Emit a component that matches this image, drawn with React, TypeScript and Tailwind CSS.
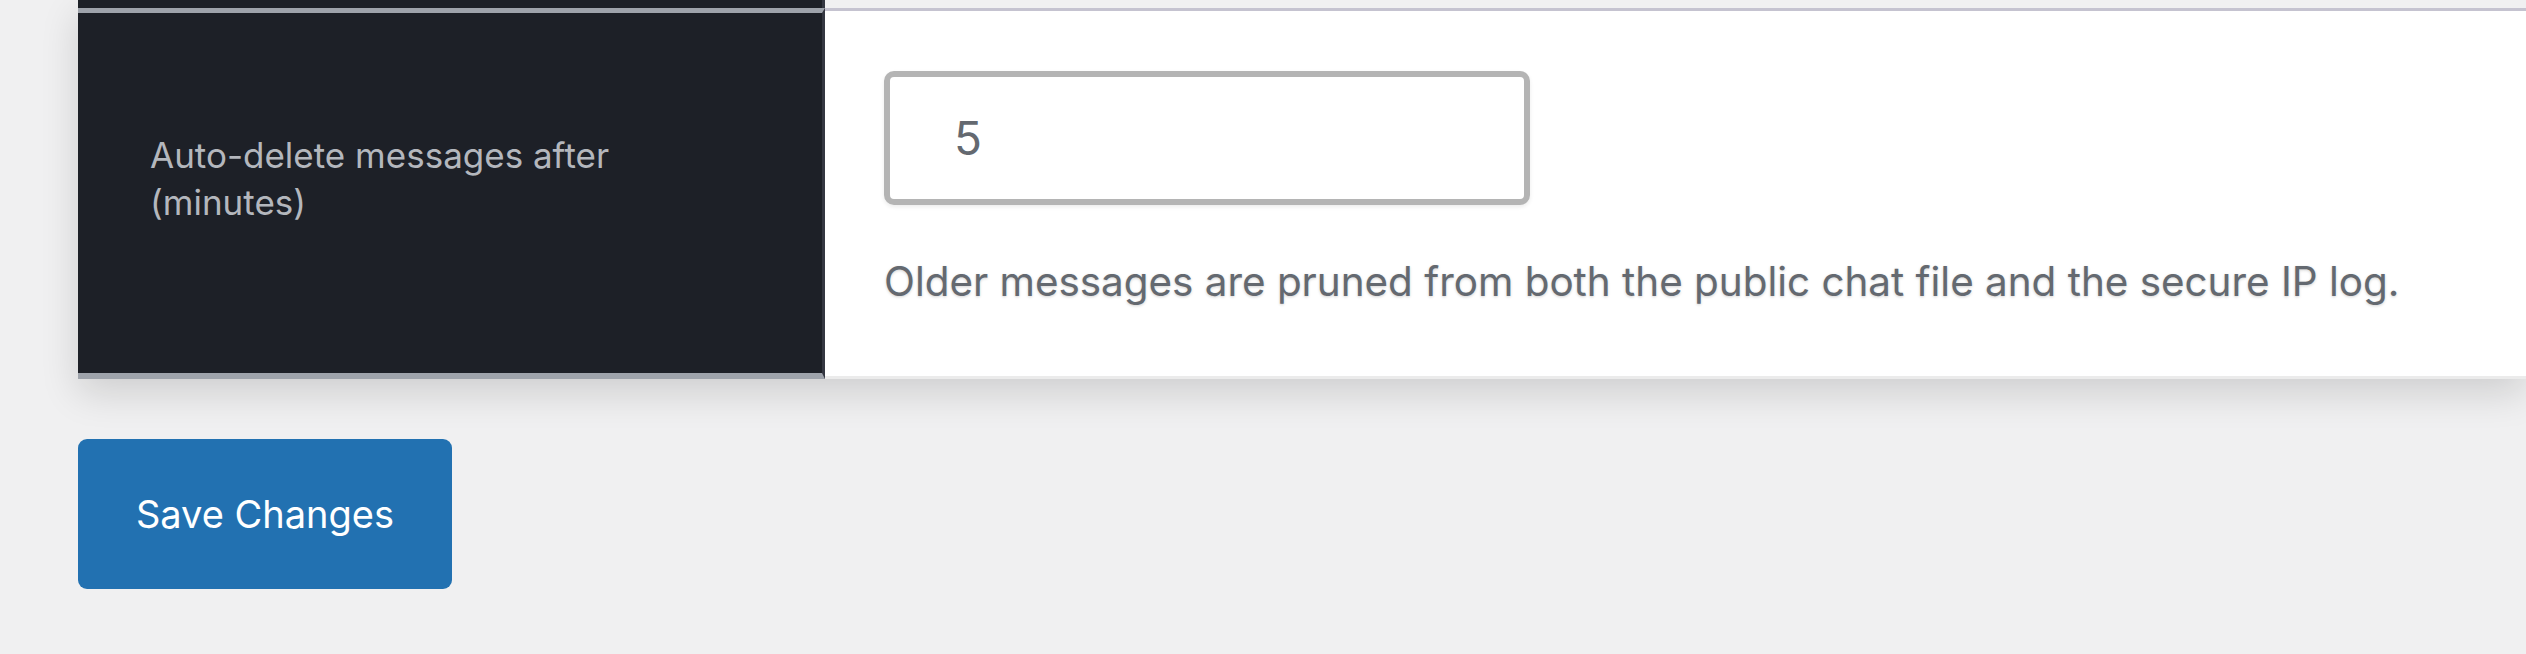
import { useState } from 'react'

export default function App() {
  const [minutes, setMinutes] = useState('5')

  return (
    <div
      className="w-[2526px] h-[654px] overflow-hidden bg-[#f0f0f1]"
      style={{ fontFamily: 'Inter, "Noto Sans", sans-serif' }}
    >
      <div className="pl-[78px]">
        <div className="shadow-[0_14px_36px_rgba(0,0,0,0.14)]">
          {/* tail of previous row */}
          <div className="flex h-[8px]">
            <div className="w-[747px] bg-[#1d2027] border-r-[3px] border-r-[#343741]" />
            <div className="flex-1 bg-[#f0f0f1]" />
          </div>

          <div className="flex">
            {/* label cell */}
            <div className="w-[747px] shrink-0 bg-[#1d2027] border-t-[5px] border-b-[6px] border-[#9ea3ab] border-r-[3px] border-r-[#343741] pl-[72px] pr-[180px] pt-[119px] h-[371px]">
              <label className="block text-[35px] leading-[47px] text-[#b4b7bd]">
                Auto-delete messages after (minutes)
              </label>
            </div>

            {/* field cell */}
            <div className="flex-1 bg-white border-t-[3px] border-[#c5c3d0] border-b-[3px] border-b-[#ebebeb] pl-[59px] pt-[60px] h-[371px]">
              <input
                type="text"
                value={minutes}
                onChange={e => setMinutes(e.target.value)}
                className="block w-[646px] h-[134px] px-[64px] rounded-[10px] border-[6px] border-[#b4b4b4] bg-white text-[46px] text-[#646970] shadow-[0_2px_4px_rgba(0,0,0,0.08)] outline-none"
                style={{ fontFamily: 'Inter, "Noto Sans", sans-serif' }}
              />
              <p className="mt-[51px] text-[40.4px] leading-[52px] text-[#646970] [text-shadow:0_1px_3px_rgba(0,0,0,0.18)]">
                Older messages are pruned from both the public chat file and the secure IP log.
              </p>
            </div>
          </div>
        </div>

        <button
          type="button"
          className="mt-[60px] w-[374px] h-[150px] rounded-[9px] bg-[#2271b1] text-white text-[38px] font-normal"
        >
          Save Changes
        </button>
      </div>
    </div>
  )
}
